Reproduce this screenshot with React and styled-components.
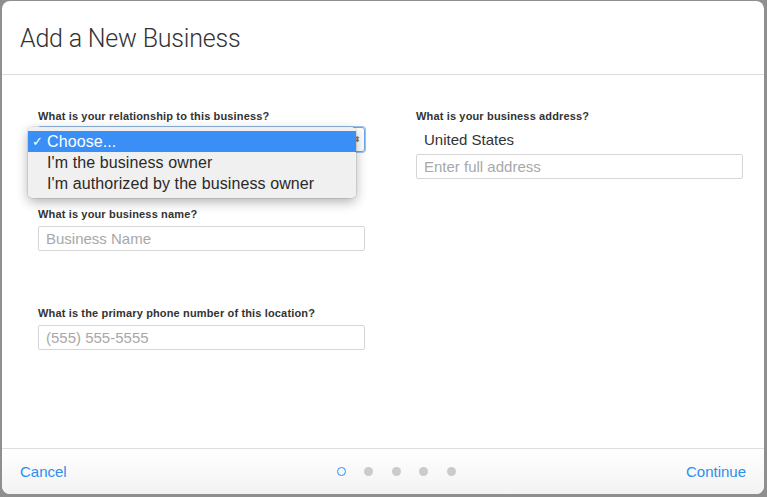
import React from "react";
import styled, { createGlobalStyle } from "styled-components";

const GlobalStyle = createGlobalStyle`
  html, body {
    margin: 0;
    padding: 0;
    background: #8f8f8f;
  }
  * {
    box-sizing: border-box;
  }
`;

const font = `"Liberation Sans", Arial, sans-serif`;

const Page = styled.div`
  width: 767px;
  height: 497px;
  padding: 1px 3px 3px 2px;
  font-family: ${font};
`;

const Modal = styled.div`
  width: 100%;
  height: 100%;
  background: #fff;
  border-radius: 8px;
  overflow: hidden;
  display: flex;
  flex-direction: column;
`;

const Header = styled.div`
  height: 74px;
  flex-shrink: 0;
  display: flex;
  align-items: center;
  padding: 2px 18px 0;
  border-bottom: 1px solid #dcdcdc;
  h1 {
    margin: 0;
    font-family: Roboto, ${font};
    font-weight: 300;
    font-size: 25px;
    color: #333;
    letter-spacing: -0.2px;
  }
`;

const Body = styled.div`
  flex: 1;
  display: grid;
  grid-template-columns: 327px 327px;
  column-gap: 51px;
  padding: 34px 21px 0 36px;
  align-items: start;
`;

const Column = styled.div`
  display: flex;
  flex-direction: column;
  gap: 55px;
`;

const Field = styled.div`
  display: flex;
  flex-direction: column;
  position: relative;
`;

const Label = styled.label`
  font-size: 11px;
  line-height: 14px;
  font-weight: 700;
  letter-spacing: 0.15px;
  color: #333;
  margin-bottom: ${(p) => p.$space || 4}px;
`;

const Input = styled.input`
  height: 25px;
  width: 100%;
  border: 1px solid #d6d6d6;
  border-radius: 2px;
  padding: 0 7px;
  font-family: ${font};
  font-size: 15px;
  color: #333;
  outline: none;
  &::placeholder {
    color: #a8a8a8;
  }
`;

const SelectBox = styled.div`
  height: 25px;
  width: 100%;
  border: 1px solid #6aa6e8;
  border-radius: 3px;
  box-shadow: 0 0 0 1px #9cc4f0;
  display: flex;
  justify-content: flex-end;
  align-items: center;
  padding-right: 3px;
  color: #777;
  font-size: 8px;
`;

const Menu = styled.div`
  position: absolute;
  top: 18px;
  left: -10px;
  width: 328px;
  padding: 4px 0 4px;
  background: rgba(240, 240, 240, 0.98);
  border-radius: 5px;
  box-shadow: 0 4px 12px rgba(0, 0, 0, 0.3), 0 0 0 1px rgba(0, 0, 0, 0.08);
  z-index: 2;
`;

const Option = styled.div`
  height: 21px;
  display: flex;
  align-items: center;
  padding-left: 19px;
  position: relative;
  font-size: 16px;
  letter-spacing: 0.1px;
  color: ${(p) => (p.$active ? "#fff" : "#2a2a2a")};
  background: ${(p) => (p.$active ? "#3a8ff7" : "transparent")};
  span {
    position: absolute;
    left: 4px;
    font-size: 13px;
  }
`;

const Country = styled.div`
  font-size: 15px;
  line-height: 18px;
  color: #333;
  padding: 5px 0 0 8px;
  height: 28px;
`;

const Footer = styled.div`
  height: 46px;
  flex-shrink: 0;
  border-top: 1px solid #dedede;
  background: linear-gradient(#fff, #f3f3f3);
  display: flex;
  align-items: center;
  justify-content: space-between;
  padding: 0 18px 0 18px;
`;

const Link = styled.a`
  font-size: 15px;
  color: #2d8ef0;
  text-decoration: none;
  width: 80px;
  text-align: ${(p) => p.$align || "left"};
`;

const Dots = styled.div`
  display: flex;
  gap: 18.5px;
  align-items: center;
  margin-left: 26px;
`;

const Dot = styled.span`
  width: 9px;
  height: 9px;
  border-radius: 50%;
  background: ${(p) => (p.$current ? "transparent" : "#cbcbcb")};
  border: ${(p) => (p.$current ? "1.5px solid #2d8ef0" : "none")};
`;

export default function App() {
  return (
    <Page>
      <GlobalStyle />
      <Modal>
        <Header>
          <h1>Add a New Business</h1>
        </Header>
        <Body>
          <Column>
            <Field>
              <Label>What is your relationship to this business?</Label>
              <SelectBox>⬍</SelectBox>
              <Menu>
                <Option $active>
                  <span>✓</span>Choose...
                </Option>
                <Option>I'm the business owner</Option>
                <Option>I'm authorized by the business owner</Option>
              </Menu>
            </Field>
            <Field>
              <Label $space={5}>What is your business name?</Label>
              <Input placeholder="Business Name" />
            </Field>
            <Field>
              <Label $space={5}>What is the primary phone number of this location?</Label>
              <Input placeholder="(555) 555-5555" />
            </Field>
          </Column>
          <Column>
            <Field>
              <Label $space={3}>What is your business address?</Label>
              <Country>United States</Country>
              <Input placeholder="Enter full address" />
            </Field>
          </Column>
        </Body>
        <Footer>
          <Link href="#">Cancel</Link>
          <Dots>
            <Dot $current />
            <Dot />
            <Dot />
            <Dot />
            <Dot />
          </Dots>
          <Link href="#" $align="right">
            Continue
          </Link>
        </Footer>
      </Modal>
    </Page>
  );
}
